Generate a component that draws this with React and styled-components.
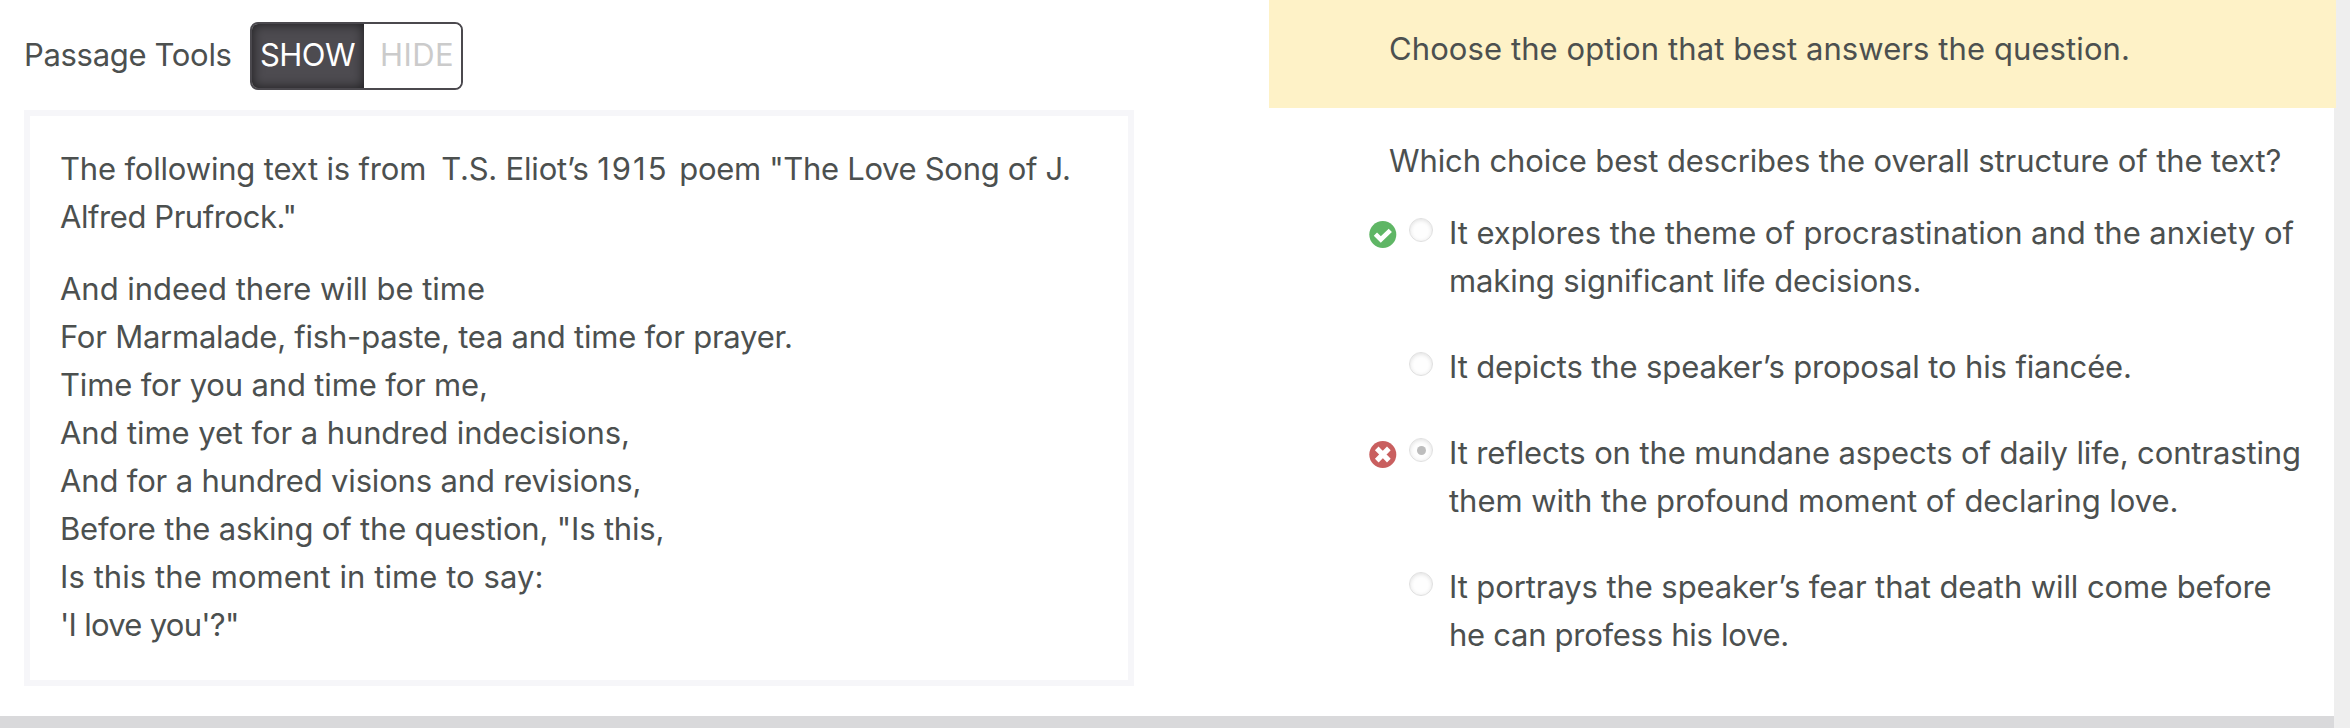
import React from 'react';
import styled, { createGlobalStyle } from 'styled-components';

const GlobalStyle = createGlobalStyle`
  *, *::before, *::after { box-sizing: border-box; }
  body {
    margin: 0;
    background: #eeeeee;
    color: #4c504f;
    font-family: Inter, 'Liberation Sans', sans-serif;
    font-size: 31px;
    line-height: 48px;
  }
`;

const Page = styled.div`
  display: flex;
  flex-direction: column;
  width: 2350px;
  height: 728px;
  overflow: hidden;
`;

const Columns = styled.main`
  display: flex;
  flex: 1;
  width: 2334px;
  background: #ffffff;
`;

const BottomBar = styled.footer`
  width: 2334px;
  height: 12px;
  background: #d9d9db;
`;

const PassageColumn = styled.section`
  flex: none;
  width: 1269px;
  padding: 22px 0 0 24px;
`;

const ToolsRow = styled.div`
  display: flex;
  align-items: center;
  height: 68px;
`;

const Line = styled.span`
  display: block;
  white-space: pre;
  letter-spacing: ${(p) => p.$track || 0}px;
`;

const Segment = styled.span`
  letter-spacing: ${(p) => p.$track}px;
`;

const ToolsLabel = styled.div`
  width: 226px;
  padding-bottom: 2px;
`;

const Toggle = styled.div`
  display: flex;
  width: 213px;
  height: 68px;
  overflow: hidden;
  border: 2px solid #4b494e;
  border-radius: 8px;
`;

const ToggleOption = styled.button`
  display: flex;
  align-items: center;
  flex: ${(p) => (p.$active ? '0 0 112px' : '1')};
  padding: 0 0 2px ${(p) => (p.$active ? 8 : 16)}px;
  border: 0;
  background: ${(p) => (p.$active ? '#4d4b50' : '#ffffff')};
  box-shadow: ${(p) => (p.$active ? 'inset 0 0 12px rgba(0, 0, 0, 0.65)' : 'none')};
  color: ${(p) => (p.$active ? '#ffffff' : '#cbcbcb')};
  font: inherit;
`;

const PassageBox = styled.article`
  width: 1110px;
  height: 576px;
  margin-top: 20px;
  padding: 29px 30px 0;
  border: 6px solid #f6f6f9;
`;

const Paragraph = styled.p`
  margin: 0 0 24px;
`;

const QuestionColumn = styled.section`
  flex: none;
  width: 1067px;
`;

const Banner = styled.header`
  height: 108px;
  padding: 25px 0 0 120px;
  background: #fef2c7;
`;

const Question = styled.div`
  padding: 29px 0 24px 120px;
`;

const Options = styled.ul`
  display: flex;
  flex-direction: column;
  gap: 38px;
  margin: 0;
  padding: 0 0 0 100px;
  list-style: none;
`;

const Option = styled.li`
  display: grid;
  grid-template-columns: 28px 24px 1fr;
  column-gap: 12px;
  align-items: start;
`;

const MarkSlot = styled.span`
  display: flex;
  height: 28px;
  margin-top: 12px;
`;

const Radio = styled.span`
  display: flex;
  align-items: center;
  justify-content: center;
  width: 24px;
  height: 24px;
  margin-top: 9px;
  border: 1px solid #e0e0e0;
  border-radius: 50%;
  background: #fefefe;
  box-shadow: inset 0 1px 4px rgba(0, 0, 0, 0.12);
`;

const RadioDot = styled.span`
  width: 9px;
  height: 9px;
  border-radius: 50%;
  background: #bdbdbd;
`;

const OptionText = styled.div`
  margin-left: 4px;
`;

function CorrectMark() {
  return (
    <svg width="28" height="28" viewBox="0.2 0.5 28 28" aria-label="Correct">
      <circle cx="14" cy="14" r="13.5" fill="#5fb665" />
      <path d="M6.6 13.6 L12 19 L21.5 9.8" fill="none" stroke="#fff" strokeWidth="4.6" />
    </svg>
  );
}

function IncorrectMark() {
  return (
    <svg width="28" height="28" viewBox="0.2 0.5 28 28" aria-label="Incorrect">
      <circle cx="14" cy="14" r="13.5" fill="#c95f5f" />
      <path d="M9.8 9.8 L18.2 18.2 M18.2 9.8 L9.8 18.2" fill="none" stroke="#fff" strokeWidth="5.2" strokeLinecap="square" />
    </svg>
  );
}

const intro = [
  ['Alfred Prufrock."', -0.433],
];

const poem = [
  ['And indeed there will be time', -0.03],
  ['For Marmalade, fish-paste, tea and time for prayer.', -0.23],
  ['Time for you and time for me,', -0.152],
  ['And time yet for a hundred indecisions,', -0.093],
  ['And for a hundred visions and revisions,', -0.163],
  ['Before the asking of the question, "Is this,', -0.18],
  ['Is this the moment in time to say:', 0.08],
  ["'I love you'?\"", -0.72],
];

const options = [
  {
    mark: 'correct',
    lines: [
      ['It explores the theme of procrastination and the anxiety of', -0.056],
      ['making significant life decisions.', -0.11],
    ],
  },
  { lines: [['It depicts the speaker’s proposal to his fiancée.', -0.134]] },
  {
    mark: 'incorrect',
    selected: true,
    lines: [
      ['It reflects on the mundane aspects of daily life, contrasting', -0.118],
      ['them with the profound moment of declaring love.', -0.046],
    ],
  },
  {
    lines: [
      ['It portrays the speaker’s fear that death will come before', -0.096],
      ['he can profess his love.', -0.28],
    ],
  },
];

const renderLines = (lines) =>
  lines.map(([text, track]) => (
    <Line key={text} $track={track}>
      {text}
    </Line>
  ));

export default function App() {
  return (
    <>
      <GlobalStyle />
      <Page>
        <Columns>
          <PassageColumn>
            <ToolsRow>
              <ToolsLabel>
                <Line $track={-0.32}>Passage Tools</Line>
              </ToolsLabel>
              <Toggle>
                <ToggleOption $active>
                  <Line $track={-0.54}>SHOW</Line>
                </ToggleOption>
                <ToggleOption>
                  <Line $track={0.42}>HIDE</Line>
                </ToggleOption>
              </Toggle>
            </ToolsRow>
            <PassageBox>
              <Paragraph>
                <Line>
                  <Segment $track={-0.18}>The following text is from</Segment>
                  <Segment $track={-1.2}>{' \u00a0'}</Segment>
                  <Segment $track={-0.2}>T.S. Eliot’s </Segment>
                  <Segment $track={2}>1915 </Segment>
                  <Segment $track={-0.31}>poem "The Love Song of J.</Segment>
                </Line>
                {renderLines(intro)}
              </Paragraph>
              <Paragraph>{renderLines(poem)}</Paragraph>
            </PassageBox>
          </PassageColumn>
          <QuestionColumn>
            <Banner>
              <Line $track={0.089}>Choose the option that best answers the question.</Line>
            </Banner>
            <Question>
              <Line $track={-0.115}>Which choice best describes the overall structure of the text?</Line>
            </Question>
            <Options>
              {options.map((option) => (
                <Option key={option.lines[0][0]}>
                  <MarkSlot>
                    {option.mark === 'correct' && <CorrectMark />}
                    {option.mark === 'incorrect' && <IncorrectMark />}
                  </MarkSlot>
                  <Radio>{option.selected && <RadioDot />}</Radio>
                  <OptionText>{renderLines(option.lines)}</OptionText>
                </Option>
              ))}
            </Options>
          </QuestionColumn>
        </Columns>
        <BottomBar />
      </Page>
    </>
  );
}
